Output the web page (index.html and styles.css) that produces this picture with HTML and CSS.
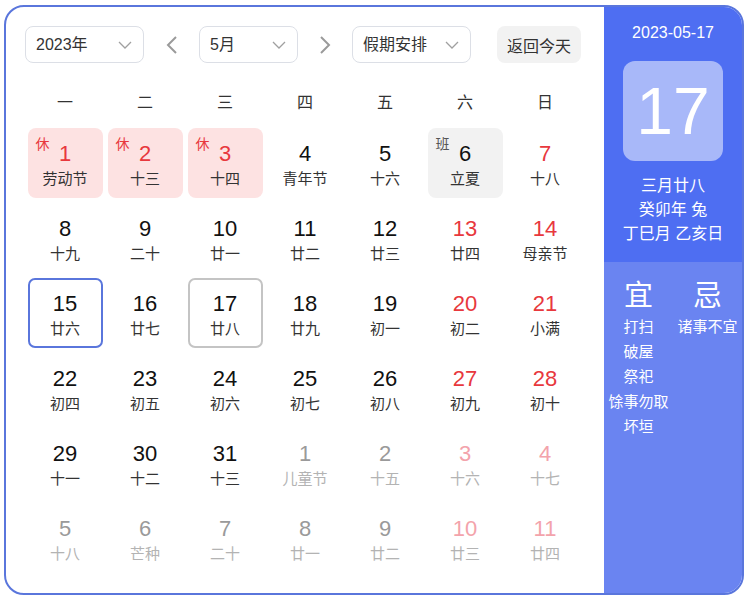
FILE: index.html
```html
<!DOCTYPE html>
<html lang="zh-CN">
<head>
<meta charset="utf-8">
<title>万年历</title>
<link rel="stylesheet" href="styles.css">
</head>
<body>
<div class="calendar">
  <div class="main">
    <div class="toolbar">
      <div class="select select-year"><span>2023年</span><svg class="chev" width="14" height="8" viewBox="0 0 14 8"><path d="M1 1 L7 7 L13 1" /></svg></div>
      <button class="arrow"><svg width="12" height="18" viewBox="0 0 12 18"><path d="M10 1 L2 9 L10 17" /></svg></button>
      <div class="select select-month"><span>5月</span><svg class="chev" width="14" height="8" viewBox="0 0 14 8"><path d="M1 1 L7 7 L13 1" /></svg></div>
      <button class="arrow"><svg width="12" height="18" viewBox="0 0 12 18"><path d="M2 1 L10 9 L2 17" /></svg></button>
      <div class="select select-holiday"><span>假期安排</span><svg class="chev" width="14" height="8" viewBox="0 0 14 8"><path d="M1 1 L7 7 L13 1" /></svg></div>
      <button class="today-btn">返回今天</button>
    </div>
    <div class="weekdays">
      <span>一</span><span>二</span><span>三</span><span>四</span><span>五</span><span>六</span><span>日</span>
    </div>
    <div class="grid">
      <div class="slot"><div class="day rest red"><span class="tag">休</span><b>1</b><i>劳动节</i></div></div>
      <div class="slot"><div class="day rest red"><span class="tag">休</span><b>2</b><i>十三</i></div></div>
      <div class="slot"><div class="day rest red"><span class="tag">休</span><b>3</b><i>十四</i></div></div>
      <div class="slot"><div class="day"><b>4</b><i>青年节</i></div></div>
      <div class="slot"><div class="day"><b>5</b><i>十六</i></div></div>
      <div class="slot"><div class="day work"><span class="tag">班</span><b>6</b><i>立夏</i></div></div>
      <div class="slot"><div class="day red"><b>7</b><i>十八</i></div></div>

      <div class="slot"><div class="day"><b>8</b><i>十九</i></div></div>
      <div class="slot"><div class="day"><b>9</b><i>二十</i></div></div>
      <div class="slot"><div class="day"><b>10</b><i>廿一</i></div></div>
      <div class="slot"><div class="day"><b>11</b><i>廿二</i></div></div>
      <div class="slot"><div class="day"><b>12</b><i>廿三</i></div></div>
      <div class="slot"><div class="day red"><b>13</b><i>廿四</i></div></div>
      <div class="slot"><div class="day red"><b>14</b><i>母亲节</i></div></div>

      <div class="slot"><div class="day selected"><b>15</b><i>廿六</i></div></div>
      <div class="slot"><div class="day"><b>16</b><i>廿七</i></div></div>
      <div class="slot"><div class="day today"><b>17</b><i>廿八</i></div></div>
      <div class="slot"><div class="day"><b>18</b><i>廿九</i></div></div>
      <div class="slot"><div class="day"><b>19</b><i>初一</i></div></div>
      <div class="slot"><div class="day red"><b>20</b><i>初二</i></div></div>
      <div class="slot"><div class="day red"><b>21</b><i>小满</i></div></div>

      <div class="slot"><div class="day"><b>22</b><i>初四</i></div></div>
      <div class="slot"><div class="day"><b>23</b><i>初五</i></div></div>
      <div class="slot"><div class="day"><b>24</b><i>初六</i></div></div>
      <div class="slot"><div class="day"><b>25</b><i>初七</i></div></div>
      <div class="slot"><div class="day"><b>26</b><i>初八</i></div></div>
      <div class="slot"><div class="day red"><b>27</b><i>初九</i></div></div>
      <div class="slot"><div class="day red"><b>28</b><i>初十</i></div></div>

      <div class="slot"><div class="day"><b>29</b><i>十一</i></div></div>
      <div class="slot"><div class="day"><b>30</b><i>十二</i></div></div>
      <div class="slot"><div class="day"><b>31</b><i>十三</i></div></div>
      <div class="slot"><div class="day other"><b>1</b><i>儿童节</i></div></div>
      <div class="slot"><div class="day other"><b>2</b><i>十五</i></div></div>
      <div class="slot"><div class="day other red"><b>3</b><i>十六</i></div></div>
      <div class="slot"><div class="day other red"><b>4</b><i>十七</i></div></div>

      <div class="slot"><div class="day other"><b>5</b><i>十八</i></div></div>
      <div class="slot"><div class="day other"><b>6</b><i>芒种</i></div></div>
      <div class="slot"><div class="day other"><b>7</b><i>二十</i></div></div>
      <div class="slot"><div class="day other"><b>8</b><i>廿一</i></div></div>
      <div class="slot"><div class="day other"><b>9</b><i>廿二</i></div></div>
      <div class="slot"><div class="day other red"><b>10</b><i>廿三</i></div></div>
      <div class="slot"><div class="day other red"><b>11</b><i>廿四</i></div></div>
    </div>
  </div>
  <aside class="side">
    <div class="side-top">
      <div class="side-date">2023-05-17</div>
      <div class="side-big">17</div>
      <div class="side-lunar">
        <div>三月廿八</div>
        <div>癸卯年 兔</div>
        <div>丁巳月 乙亥日</div>
      </div>
    </div>
    <div class="side-bottom">
      <div class="col">
        <div class="col-title">宜</div>
        <div>打扫</div>
        <div>破屋</div>
        <div>祭祀</div>
        <div>馀事勿取</div>
        <div>坏垣</div>
      </div>
      <div class="col">
        <div class="col-title">忌</div>
        <div>诸事不宜</div>
      </div>
    </div>
  </aside>
</div>
</body>
</html>
```

FILE: styles.css
```css
* { box-sizing: border-box; }

body {
  margin: 0;
  background: #ffffff;
  font-family: "Liberation Sans", "Noto Sans CJK SC", sans-serif;
  color: #333;
}

.calendar {
  margin: 5px 4px 0 4px;
  width: 740px;
  height: 590px;
  border: 2px solid #5a76dc;
  border-radius: 20px;
  display: flex;
  overflow: hidden;
  background: #fff;
}

.main {
  width: 598px;
  padding: 19px 19px 0 19px;
}

.toolbar {
  display: flex;
  align-items: center;
  height: 37px;
}

.select {
  height: 37px;
  border: 1px solid #dcdfe6;
  border-radius: 8px;
  display: flex;
  align-items: center;
  justify-content: space-between;
  padding: 0 11px 0 10px;
  font-size: 16px;
  color: #333;
  line-height: 20px;
}

.select-year { width: 119px; }
.select-month { width: 99px; }
.select-holiday { width: 119px; }

.chev path {
  fill: none;
  stroke: #a0a0a0;
  stroke-width: 1.3;
}

.arrow {
  width: 55px;
  height: 37px;
  border: 0;
  background: none;
  padding: 0;
  display: flex;
  align-items: center;
  justify-content: center;
}
.select-month + .arrow { width: 54px; }

.arrow path {
  fill: none;
  stroke: #9a9a9a;
  stroke-width: 2;
}

.today-btn {
  margin-left: 26px;
  width: 84px;
  height: 37px;
  border: 0;
  border-radius: 8px;
  background: #f2f2f2;
  font-family: inherit;
  font-size: 16px;
  color: #333;
  padding: 0;
}

.weekdays {
  display: grid;
  grid-template-columns: repeat(7, 80px);
  margin-top: 20px;
  margin-bottom: 2px;
  line-height: 40px;
  font-size: 16px;
  text-align: center;
  color: #333;
}

.grid {
  display: grid;
  grid-template-columns: repeat(7, 80px);
  grid-auto-rows: 75px;
}

.slot {
  display: flex;
  align-items: center;
  justify-content: center;
}

.day {
  position: relative;
  width: 75px;
  height: 70px;
  border-radius: 8px;
  display: flex;
  flex-direction: column;
  align-items: center;
  padding-top: 12px;
  border: 2px solid transparent;
}

.day b {
  font-weight: normal;
  font-size: 22px;
  line-height: 24px;
  height: 24px;
  color: #111;
}

.day i {
  font-style: normal;
  font-size: 15px;
  line-height: 20px;
  margin-top: 3px;
  color: #333;
}

.day.red b { color: #e8383d; }

.day.rest { background: #fde2e2; }
.day.work { background: #f2f2f2; }

.tag {
  position: absolute;
  left: 6px;
  top: 5px;
  font-size: 14px;
  line-height: 18px;
}
.rest .tag { color: #e8383d; }
.work .tag { color: #555; }

.day.selected { border-color: #5a76dc; border-radius: 7px; }
.day.today { border-color: #c4c4c4; border-radius: 7px; }

.day.other b { color: #9a9a9a; }
.day.other i { color: #b3b3b3; }
.day.other.red b { color: #f3a3ab; }

.side {
  width: 138px;
  display: flex;
  flex-direction: column;
  color: #fff;
}

.side-top {
  background: #4e6ef2;
  padding: 14px 0 16px;
  display: flex;
  flex-direction: column;
  align-items: center;
}

.side-date {
  font-size: 16px;
  line-height: 24px;
}

.side-big {
  margin-top: 16px;
  width: 100px;
  height: 100px;
  border-radius: 12px;
  background: #a8b8f9;
  font-size: 66px;
  line-height: 100px;
  text-align: center;
}

.side-lunar {
  margin-top: 13px;
  font-size: 16px;
  line-height: 24px;
  text-align: center;
}

.side-bottom {
  flex: 1;
  background: #6a84f1;
  display: flex;
  padding-top: 16px;
}

.col {
  width: 69px;
  text-align: center;
  font-size: 15px;
  line-height: 25px;
  white-space: nowrap;
}

.col-title {
  font-size: 29px;
  line-height: 36px;
}
```
